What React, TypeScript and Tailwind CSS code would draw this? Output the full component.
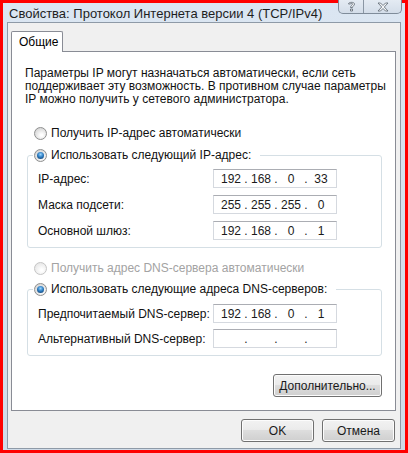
import React from "react";

const font = { fontFamily: '"Liberation Sans", Arial, sans-serif' };

function Radio({ checked, disabled }: { checked?: boolean; disabled?: boolean }) {
  return (
    <span
      className={
        "relative flex items-center justify-center w-[13px] h-[13px] rounded-full border shrink-0 " +
        (disabled
          ? "border-[#c5c5c5] bg-[radial-gradient(circle_at_60%_65%,#ffffff_10%,#e6e6e6_80%)]"
          : "border-[#8e8f8f] bg-[radial-gradient(circle_at_60%_65%,#ffffff_10%,#d4d4d4_80%)]")
      }
    >
      {checked && (
        <span className="w-[7px] h-[7px] rounded-full bg-[radial-gradient(circle_at_50%_35%,#9bd6ff_0%,#2f7fc4_45%,#0c325c_100%)]" />
      )}
    </span>
  );
}

function IpBox({ parts }: { parts: string[] }) {
  return (
    <div className="flex items-center w-[124px] h-[19px] bg-white border border-[#d5d9df] border-t-[#abadb3] pl-[4px] text-[12px] text-[#1a1a1a] leading-none">
      {parts.map((p, i) => (
        <React.Fragment key={i}>
          <span className="w-[26px] text-center">{p}</span>
          {i < 3 && <span className="w-[4px] text-center">.</span>}
        </React.Fragment>
      ))}
    </div>
  );
}

function Row({ label, parts }: { label: string; parts: string[] }) {
  return (
    <div className="flex items-center">
      <span className="w-[175px] text-[12px] whitespace-nowrap">{label}</span>
      <IpBox parts={parts} />
    </div>
  );
}

function Button({ children, w }: { children: React.ReactNode; w: string }) {
  return (
    <div
      className={
        w +
        " h-[23px] flex items-center justify-center rounded-[3px] border border-[#707070] bg-[linear-gradient(to_bottom,#f2f2f2_0%,#ebebeb_45%,#dddddd_50%,#cfcfcf_100%)] text-[12px] text-[#1a1a1a] shadow-[inset_0_0_0_1px_#fcfcfc]"
      }
    >
      {children}
    </div>
  );
}

export default function App() {
  return (
    <div className="w-[408px] h-[453px] bg-[#ff0000] p-[3px]" style={font}>
      <div className="h-full flex flex-col bg-[linear-gradient(to_bottom,#dbe6f2,#cfdbe8)] px-[4px] pb-[1px]">
        {/* title bar */}
        <div className="h-[20px] flex items-start relative">
          <span className="pl-[2px] pt-[3px] text-[13px] text-[#1e1e1e] leading-[15px] whitespace-nowrap">
            Свойства: Протокол Интернета версии 4 (TCP/IPv4)
          </span>
          <div className="ml-auto mr-[-1px] flex h-[14px] mt-[-3px] border border-[#7f8c9a] border-t-0 rounded-b-[5px] bg-[linear-gradient(to_bottom,#e4ebf3,#d3dde9)] overflow-hidden">
            <div className="w-[25px] flex items-center justify-center border-r border-[#8a96a4]">
              <svg width="9" height="11" viewBox="0 0 9 11">
                <path
                  d="M1.5 3 C1.5 0.8 7.5 0.8 7.5 3 C7.5 4.6 5.5 5 5.5 6.5 L3.5 6.5 C3.5 4.6 5.5 4.2 5.5 3 C5.5 2 3.5 2 3.5 3 Z M3.5 8 H5.5 V10 H3.5 Z"
                  fill="#f4f6f8"
                  stroke="#5a6470"
                  strokeWidth="0.8"
                />
              </svg>
            </div>
            <div className="w-[37px] flex items-center justify-center">
              <svg width="12" height="10" viewBox="0 0 12 10">
                <path
                  d="M1 1 H3.5 L6 3.5 L8.5 1 H11 L7.3 5 L11 9 H8.5 L6 6.5 L3.5 9 H1 L4.7 5 Z"
                  fill="#f4f6f8"
                  stroke="#5a6470"
                  strokeWidth="0.8"
                />
              </svg>
            </div>
          </div>
        </div>

        {/* client area */}
        <div className="flex-1 flex flex-col border border-[#8e9aa7] bg-[#f0f0f0] pt-[8px] pl-[3px] pr-[4px] pb-[6px]">
          {/* tab strip */}
          <div className="flex h-[20px]">
            <div className="w-[52px] h-[21px] bg-white border border-[#898c95] border-b-0 rounded-t-[2px] text-[12px] pl-[7px] pt-[3px] leading-[15px] relative z-10">
              Общие
            </div>
          </div>
          {/* tab panel */}
          <div className="h-[360px] bg-white border border-[#898c95] flex flex-col pl-[13px] pr-[13px] pt-[15px] text-[12px] text-[#111]">
            <p className="leading-[13px] whitespace-nowrap">
              Параметры IP могут назначаться автоматически, если сеть
              <br />
              поддерживает эту возможность. В противном случае параметры
              <br />
              IP можно получить у сетевого администратора.
            </p>

            <div className="flex items-center gap-[4px] mt-[21px] ml-[9px] h-[13px]">
              <Radio />
              <span className="leading-[13px]">Получить IP-адрес автоматически</span>
            </div>

            <fieldset className="mt-[8px] ml-[2px] border border-[#d5dfe5] rounded-[3px] pl-[10px] pt-[7px] pb-[7px] flex flex-col gap-[7px]">
              <legend className="ml-[-5px] pr-[9px] pl-[1px]">
                <span className="flex items-center gap-[4px] h-[14px]">
                  <Radio checked />
                  <span className="leading-[14px]">Использовать следующий IP-адрес:</span>
                </span>
              </legend>
              <Row label="IP-адрес:" parts={["192", "168", "0", "33"]} />
              <Row label="Маска подсети:" parts={["255", "255", "255", "0"]} />
              <Row label="Основной шлюз:" parts={["192", "168", "0", "1"]} />
            </fieldset>

            <div className="flex items-center gap-[4px] mt-[14px] ml-[9px] h-[13px] text-[#a3a3a3]">
              <Radio disabled />
              <span className="leading-[13px]">Получить адрес DNS-сервера автоматически</span>
            </div>

            <fieldset className="mt-[7px] ml-[2px] border border-[#d5dfe5] rounded-[3px] pl-[10px] pt-[8px] pb-[7px] flex flex-col gap-[6px]">
              <legend className="ml-[-5px] pr-[9px] pl-[1px]">
                <span className="flex items-center gap-[4px] h-[14px]">
                  <Radio checked />
                  <span className="leading-[14px]">Использовать следующие адреса DNS-серверов:</span>
                </span>
              </legend>
              <Row label="Предпочитаемый DNS-сервер:" parts={["192", "168", "0", "1"]} />
              <Row label="Альтернативный DNS-сервер:" parts={["", "", "", ""]} />
            </fieldset>

            <div className="flex justify-end mt-[18px]">
              <Button w="w-[109px]">Дополнительно...</Button>
            </div>
          </div>

          <div className="flex justify-end gap-[8px] mt-[8px] mr-[1px]">
            <Button w="w-[73px]">OK</Button>
            <Button w="w-[73px]">Отмена</Button>
          </div>
        </div>
      </div>
    </div>
  );
}
